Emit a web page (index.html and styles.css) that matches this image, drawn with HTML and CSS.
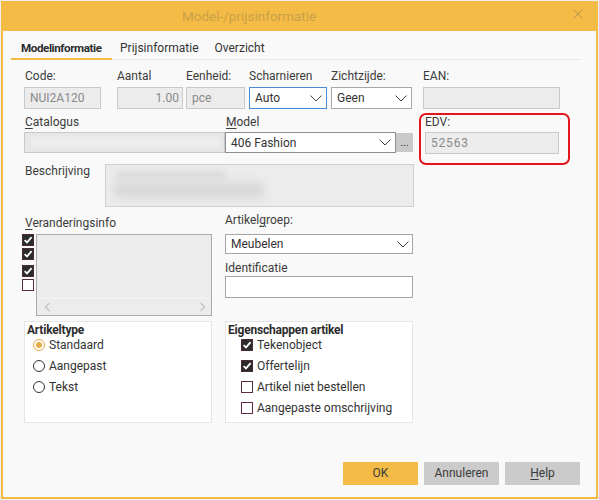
FILE: index.html
```html
<!DOCTYPE html>
<html>
<head>
<meta charset="utf-8">
<link rel="stylesheet" href="styles.css">
</head>
<body>
<div class="dialog">
  <div class="titlebar">
    <span class="title">Model-/prijsinformatie</span>
    <svg class="close" width="10" height="10" viewBox="0 0 10 10"><path d="M0.5 0.5L9.5 9.5M9.5 0.5L0.5 9.5" stroke="#b49657" stroke-width="1"/></svg>
  </div>
  <div class="content">
    <div class="tabs">
      <div class="tab active">Modelinformatie</div>
      <div class="tab">Prijsinformatie</div>
      <div class="tab">Overzicht</div>
    </div>

    <div class="row row1">
      <div class="field w-code"><div class="lbl">Code:</div><div class="input disabled">NUI2A120</div></div>
      <div class="field w-aantal"><div class="lbl lbl-flush">Aantal</div><div class="input disabled right">1.00</div></div>
      <div class="field w-eenheid"><div class="lbl lbl-flush">Eenheid:</div><div class="input disabled">pce</div></div>
      <div class="field w-scharn"><div class="lbl lbl-flush">Scharnieren</div><div class="select focus"><span>Auto</span><svg class="chev" width="12" height="7" viewBox="0 0 12 7"><path d="M0.5 0.5L6 6L11.5 0.5" fill="none" stroke="#444" stroke-width="1"/></svg></div></div>
      <div class="field w-zicht"><div class="lbl lbl-flush">Zichtzijde:</div><div class="select"><span>Geen</span><svg class="chev" width="12" height="7" viewBox="0 0 12 7"><path d="M0.5 0.5L6 6L11.5 0.5" fill="none" stroke="#444" stroke-width="1"/></svg></div></div>
      <div class="field w-ean"><div class="lbl lbl-flush">EAN:</div><div class="input disabled"></div></div>
    </div>

    <div class="row row2">
      <div class="field w-cat"><div class="lbl"><u>C</u>atalogus</div><div class="input disabled cat"><div class="blur-light"></div></div></div>
      <div class="field w-model">
        <div class="lbl"><u>M</u>odel</div>
        <div class="model-line">
          <div class="select model"><span>406 Fashion</span><svg class="chev" width="12" height="7" viewBox="0 0 12 7"><path d="M0.5 0.5L6 6L11.5 0.5" fill="none" stroke="#444" stroke-width="1"/></svg></div>
          <div class="dots">...</div>
        </div>
      </div>
      <div class="edv-box">
        <div class="lbl edv-lbl">EDV:</div>
        <div class="input disabled edv">52563</div>
      </div>
    </div>

    <div class="row row3">
      <div class="lbl besch-lbl">Beschrijving</div>
      <div class="besch"><div class="blur-a"></div><div class="blur-b"></div></div>
    </div>

    <div class="row row4">
      <div class="col-left">
        <div class="lbl ver-lbl"><u>V</u>eranderingsinfo</div>
        <div class="ver-area">
          <div class="chk-col">
            <span class="cb on c1"><svg width="10" height="10" viewBox="0 0 10 10"><path d="M1.6 5.2L4 7.4L8.6 2.2" fill="none" stroke="#fff" stroke-width="1.8"/></svg></span>
            <span class="cb on c2"><svg width="10" height="10" viewBox="0 0 10 10"><path d="M1.6 5.2L4 7.4L8.6 2.2" fill="none" stroke="#fff" stroke-width="1.8"/></svg></span>
            <span class="cb on c3"><svg width="10" height="10" viewBox="0 0 10 10"><path d="M1.6 5.2L4 7.4L8.6 2.2" fill="none" stroke="#fff" stroke-width="1.8"/></svg></span>
            <span class="cb c4"></span>
          </div>
          <div class="listbox">
            <div class="hscroll">
              <svg width="7" height="10" viewBox="0 0 7 10"><path d="M5.5 1L1.5 5L5.5 9" fill="none" stroke="#c4c4c4" stroke-width="1.4"/></svg>
              <svg width="7" height="10" viewBox="0 0 7 10"><path d="M1.5 1L5.5 5L1.5 9" fill="none" stroke="#c4c4c4" stroke-width="1.4"/></svg>
            </div>
          </div>
        </div>
      </div>
      <div class="col-right">
        <div class="lbl">Artikel<u>g</u>roep:</div>
        <div class="select ag"><span>Meubelen</span><svg class="chev" width="12" height="7" viewBox="0 0 12 7"><path d="M0.5 0.5L6 6L11.5 0.5" fill="none" stroke="#444" stroke-width="1"/></svg></div>
        <div class="lbl id-lbl">Identificatie</div>
        <div class="input white"></div>
      </div>
    </div>

    <div class="row row5">
      <div class="group">
        <div class="gtitle">Artikeltype</div>
        <div class="opts radios">
          <div class="opt"><span class="radio on"></span>Standaard</div>
          <div class="opt"><span class="radio"></span>Aangepast</div>
          <div class="opt"><span class="radio"></span>Tekst</div>
        </div>
      </div>
      <div class="group g2">
        <div class="gtitle">Eigenschappen artikel</div>
        <div class="opts checks">
          <div class="opt"><span class="cb on"><svg width="10" height="10" viewBox="0 0 10 10"><path d="M1.6 5.2L4 7.4L8.6 2.2" fill="none" stroke="#fff" stroke-width="1.8"/></svg></span>Tekenobject</div>
          <div class="opt"><span class="cb on"><svg width="10" height="10" viewBox="0 0 10 10"><path d="M1.6 5.2L4 7.4L8.6 2.2" fill="none" stroke="#fff" stroke-width="1.8"/></svg></span>Offertelijn</div>
          <div class="opt"><span class="cb"></span>Artikel niet bestellen</div>
          <div class="opt"><span class="cb"></span>Aangepaste omschrijving</div>
        </div>
      </div>
    </div>

    <div class="footer">
      <div class="btn ok">OK</div>
      <div class="btn">Annuleren</div>
      <div class="btn"><u>H</u>elp</div>
    </div>
  </div>
</div>
</body>
</html>
```

FILE: styles.css
```css
html, body {
  margin: 0;
  padding: 0;
}
body {
  background: #efefef;
  font-family: Roboto, "Liberation Sans", sans-serif;
  font-size: 12px;
  color: #333;
  width: 599px;
  height: 500px;
  overflow: hidden;
}
u { text-decoration: underline; text-underline-offset: 2px; }

.dialog {
  margin: 1px 0 0 1px;
  width: 597px;
  height: 498px;
  box-sizing: border-box;
  border: 2px solid #f4bc47;
  border-top: 0;
  background: #f9f9f9;
  display: flex;
  flex-direction: column;
}
.titlebar {
  height: 30px;
  background: #f4bc47;
  display: flex;
  align-items: flex-start;
  flex-shrink: 0;
}
.title {
  padding-left: 179px;
  line-height: 31px;
  font-size: 13.5px;
  color: #c9a047;
}
.close {
  margin-left: auto;
  margin-right: 13px;
  margin-top: 8px;
}
.content {
  flex: 1;
  display: flex;
  flex-direction: column;
}

/* tabs */
.tabs {
  margin-left: 8px;
  width: 569px;
  height: 28px;
  border-bottom: 1px solid #e6e6e6;
  display: flex;
  align-items: flex-start;
}
.tab {
  padding: 9px 8px 2px 8px;
  line-height: 16px;
  border-bottom: 2px solid transparent;
  color: #333;
  white-space: nowrap;
}
.tab.active {
  width: 81px;
  padding-left: 10px;
  padding-right: 10px;
  font-weight: 700;
  border-bottom-color: #f4bc47;
  color: #2c2c2c;
  font-size: 11.6px;
  letter-spacing: -0.4px;
}

.row { display: flex; align-items: flex-start; }
.lbl { line-height: 16px; color: #3c3c3c; white-space: nowrap; }
.field .lbl { padding-left: 1px; }
.field .lbl.lbl-flush { padding-left: 0; }

.input {
  box-sizing: border-box;
  height: 22px;
  border: 1px solid #c9c9c9;
  background: #ffffff;
  padding: 0 5px;
  line-height: 20px;
  color: #333;
  white-space: nowrap;
  overflow: hidden;
}
.input.disabled { background: #ececec; color: #8a8a8a; }
.input.right { text-align: right; padding-right: 3px; }
.input.white { border-color: #a6a6a6; }

.select {
  box-sizing: border-box;
  height: 22px;
  border: 1px solid #a7a7a7;
  background: #fff;
  padding: 0 3px 0 5px;
  line-height: 20px;
  display: flex;
  align-items: center;
  justify-content: space-between;
}
.select.focus { border-color: #4a8bd6; }
.select .chev { flex-shrink: 0; }

/* row 1 */
.row1 { margin-top: 8px; padding-left: 21px; }
.row1 .input, .row1 .select { margin-top: 3px; }
.w-code { width: 77px; }
.w-aantal { width: 66px; margin-left: 16px; }
.w-eenheid { width: 59px; margin-left: 3px; }
.w-scharn { width: 78px; margin-left: 4px; }
.w-zicht { width: 81px; margin-left: 4px; }
.w-ean { width: 137px; margin-left: 11px; }
.w-scharn .chev, .w-zicht .chev { margin-right: 1px; }

/* row 2 */
.row2 { margin-top: 4px; padding-left: 21px; }
.w-cat { width: 201px; padding-top: 1px; }
.w-cat .input { margin-top: 2px; height: 21px; }
.input.cat { position: relative; background: #e6e6e6; padding: 0; }
.blur-light {
  position: absolute;
  left: 6px; right: 4px; top: 4px; bottom: 4px;
  background: #ededed;
  filter: blur(2px);
}
.w-model { width: 188px; padding-top: 1px; }
.w-model .lbl { padding-left: 1px; }
.model-line { margin-top: 2px; display: flex; }
.select.model { width: 171px; height: 21px; border-color: #8f8f8f; padding-right: 4px; }
.dots {
  width: 17px;
  height: 19px;
  margin-top: 1px;
  background: #c9c9c9;
  text-align: center;
  line-height: 20px;
  color: #333;
  font-size: 11px;
}
.edv-box {
  margin-left: 6px;
  width: 151px;
  height: 52px;
  box-sizing: border-box;
  border: 2px solid #e3161d;
  border-radius: 7px;
  padding: 0 0 0 4px;
  margin-bottom: -12px;
}
.edv-lbl { line-height: 14px; padding-left: 0; }
.input.edv { margin-top: 3px; width: 134px; padding-left: 5px; color: #8a8a8a; letter-spacing: 0.8px; }

/* row 3 */
.row3 { margin-top: 11px; padding-left: 21px; }
.besch-lbl { width: 80px; padding-left: 1px; line-height: 14px; }
.besch {
  width: 309px;
  height: 43px;
  box-sizing: border-box;
  border: 1px solid #cfcfcf;
  background: #ececec;
  position: relative;
  overflow: hidden;
}
.blur-a {
  position: absolute; left: 10px; top: 6px; width: 110px; height: 8px;
  background: #dadada; filter: blur(3px);
}
.blur-b {
  position: absolute; left: 8px; top: 17px; width: 150px; height: 16px;
  background: #d8d8d8; filter: blur(5px);
}

/* row 4 */
.row4 { margin-top: 5px; padding-left: 19px; }
.col-left { width: 190px; padding-top: 3px; }
.ver-lbl { padding-left: 3px; }
.ver-area { margin-top: 3px; display: flex; }
.chk-col { width: 12px; display: flex; flex-direction: column; }
.cb {
  box-sizing: border-box;
  width: 12px;
  height: 12px;
  border: 1px solid #5a2c45;
  background: #fff;
  display: inline-flex;
  align-items: center;
  justify-content: center;
  flex-shrink: 0;
}
.cb.on { background: #2b2b2b; border-color: #4a2a36; }
.chk-col .c2 { margin-top: 2px; }
.chk-col .c3 { margin-top: 5px; }
.chk-col .c4 { margin-top: 2px; }
.listbox {
  margin-left: 2px;
  width: 176px;
  height: 82px;
  box-sizing: border-box;
  border: 1px solid #ababab;
  background: #ececec;
  display: flex;
  flex-direction: column;
  justify-content: flex-end;
}
.hscroll {
  height: 16px;
  border-top: 1px solid #f4f4f4;
  display: flex;
  align-items: center;
  justify-content: space-between;
  padding: 0 5px 0 7px;
}
.col-right { width: 188px; margin-left: 13px; }
.select.ag { margin-top: 6px; height: 20px; padding-right: 3px; }
.id-lbl { margin-top: 6px; }

/* row 5 */
.row5 { margin-top: 5px; padding-left: 21px; }
.group {
  width: 188px;
  height: 102px;
  box-sizing: border-box;
  border: 1px solid #e6e6e6;
  background: #fff;
  padding: 0 2px;
}
.g2 { margin-left: 13px; }
.gtitle { font-weight: 700; line-height: 16px; color: #2c2c2c; font-size: 12px; letter-spacing: -0.2px; }
.opts { margin-top: -4px; }
.opt { height: 21px; display: flex; align-items: center; white-space: nowrap; color: #333; }
.radios .opt { padding-left: 6px; }
.checks .opt { padding-left: 13px; }
.radio {
  box-sizing: border-box;
  width: 12px;
  height: 12px;
  border-radius: 50%;
  border: 1px solid #333;
  margin-right: 4px;
  background: #fff;
  display: inline-flex;
  align-items: center;
  justify-content: center;
}
.radio.on { border-color: #e2a63c; }
.radio.on::after {
  content: "";
  width: 6px;
  height: 6px;
  border-radius: 50%;
  background: #e8ad45;
}
.checks .cb { margin-right: 4px; }

/* footer */
.footer {
  margin-top: auto;
  display: flex;
  justify-content: flex-end;
  gap: 6px;
  padding: 0 16px 12px 0;
}
.btn {
  width: 75px;
  height: 23px;
  background: #cbcbcb;
  text-align: center;
  line-height: 23px;
  color: #3a3a3a;
}
.btn.ok { background: #f4bc47; }
```
